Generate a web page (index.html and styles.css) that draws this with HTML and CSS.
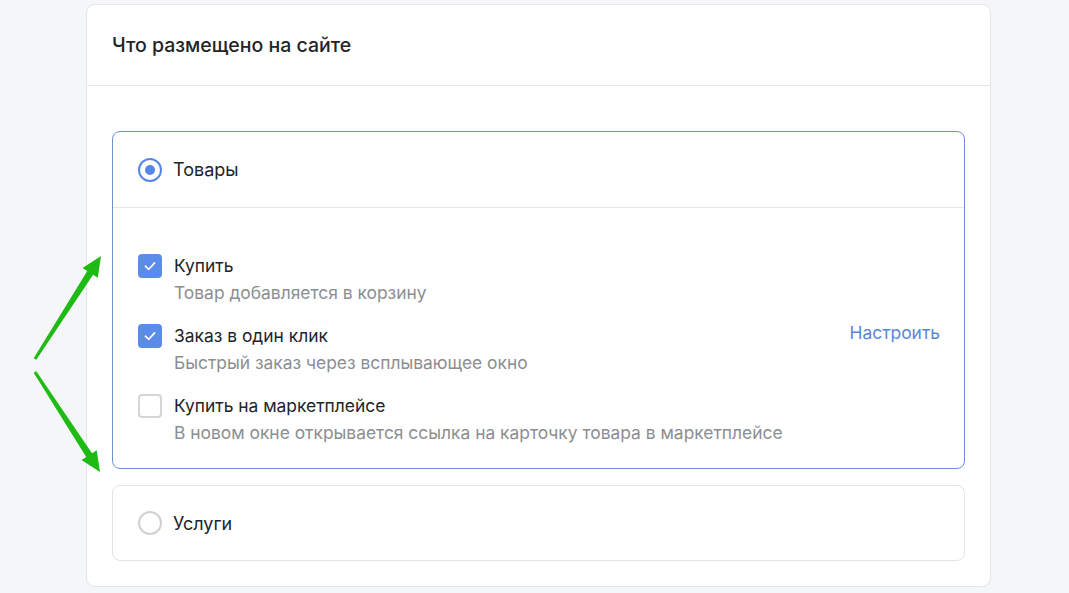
FILE: index.html
```html
<!DOCTYPE html>
<html lang="ru">
<head>
<meta charset="utf-8">
<link rel="stylesheet" href="styles.css">
</head>
<body>
<div class="page">
  <svg class="arrows" width="110" height="480" viewBox="0 0 110 480">
    <path d="M33.7 358.2 L87.3 270.9 L82.6 267.9 L101 256 L97.8 277.7 L93.1 274.7 L36.3 359.8 Z" fill="#1dbb14"/>
    <path d="M33.7 372.8 L86.2 457.1 L81.5 460.1 L100 472 L96.7 450.3 L92 453.3 L36.3 371.2 Z" fill="#1dbb14"/>
  </svg>
  <section class="card">
    <header class="card-head">Что размещено на сайте</header>
    <div class="card-body">
      <div class="option option-active">
        <div class="option-head">
          <span class="radio radio-on"></span>
          <span class="option-label">Товары</span>
        </div>
        <div class="option-body">
          <div class="item">
            <span class="check check-on"><svg width="16" height="16" viewBox="0 0 16 16"><path d="M3.4 8.2 L6.8 11.3 L12.6 4.9" fill="none" stroke="#fff" stroke-width="1.7" stroke-linecap="round" stroke-linejoin="round"/></svg></span>
            <div class="item-text">
              <div class="item-title">Купить</div>
              <div class="item-desc">Товар добавляется в корзину</div>
            </div>
          </div>
          <div class="item">
            <span class="check check-on"><svg width="16" height="16" viewBox="0 0 16 16"><path d="M3.4 8.2 L6.8 11.3 L12.6 4.9" fill="none" stroke="#fff" stroke-width="1.7" stroke-linecap="round" stroke-linejoin="round"/></svg></span>
            <div class="item-text">
              <div class="item-title">Заказ в один клик</div>
              <div class="item-desc">Быстрый заказ через всплывающее окно</div>
            </div>
            <a class="item-link">Настроить</a>
          </div>
          <div class="item">
            <span class="check"></span>
            <div class="item-text">
              <div class="item-title">Купить на маркетплейсе</div>
              <div class="item-desc">В новом окне открывается ссылка на карточку товара в маркетплейсе</div>
            </div>
          </div>
        </div>
      </div>
      <div class="option">
        <div class="option-head option-head-solo">
          <span class="radio"></span>
          <span class="option-label">Услуги</span>
        </div>
      </div>
    </div>
  </section>
</div>
</body>
</html>
```
FILE: styles.css
```css
* { box-sizing: border-box; }
html, body {
  margin: 0;
  background: #f5f6f8;
  font-family: Inter, "Noto Sans", sans-serif;
  color: #222428;
}
.page {
  position: relative;
  padding: 4px 0 0 86px;
  min-height: 593px;
}
.arrows {
  position: absolute;
  left: 0;
  top: 0;
}
.card {
  width: 905px;
  background: #fff;
  border: 1px solid #e4e5e8;
  border-radius: 9px;
}
.card-head {
  height: 81px;
  padding: 0 25px;
  display: flex;
  align-items: center;
  font-size: 19.5px;
  font-weight: 500;
  border-bottom: 1px solid #e6e7ea;
}
.card-body {
  padding: 45px 25px 25px;
  display: flex;
  flex-direction: column;
  gap: 16px;
}
.option {
  border: 1px solid #e2e3e6;
  border-radius: 8px;
}
.option-active {
  border-color: #6f93d2;
}
.option-head {
  height: 76px;
  padding: 0 25px;
  display: flex;
  align-items: center;
  gap: 11px;
  border-bottom: 1px solid #e6e7ea;
}
.option-head-solo {
  height: 74px;
  border-bottom: none;
}
.option-label {
  font-size: 18px;
}
.radio {
  width: 24px;
  height: 24px;
  border-radius: 50%;
  border: 2.5px solid #cfd1d5;
  display: flex;
  align-items: center;
  justify-content: center;
  flex: none;
}
.radio-on {
  border-color: #5687e6;
}
.radio-on::after {
  content: "";
  width: 10px;
  height: 10px;
  border-radius: 50%;
  background: #5687e6;
}
.option-body {
  padding: 46px 24px 23px 25px;
  display: flex;
  flex-direction: column;
  gap: 19px;
}
.item {
  display: flex;
  align-items: flex-start;
  gap: 12px;
}
.check {
  width: 24px;
  height: 24px;
  border-radius: 4px;
  border: 2px solid #d3d5d9;
  flex: none;
  display: flex;
  align-items: center;
  justify-content: center;
}
.check-on {
  background: #5b8ce9;
  border-color: #5b8ce9;
}
.item-text {
  flex: 1;
}
.item-title {
  font-size: 17.4px;
  line-height: 24px;
}
.item-desc {
  font-size: 17.4px;
  line-height: 24px;
  margin-top: 3px;
  color: #8c8e92;
}
.item-link {
  font-size: 17.4px;
  line-height: 24px;
  margin-top: -3px;
  color: #5a86d8;
  cursor: pointer;
}
```
